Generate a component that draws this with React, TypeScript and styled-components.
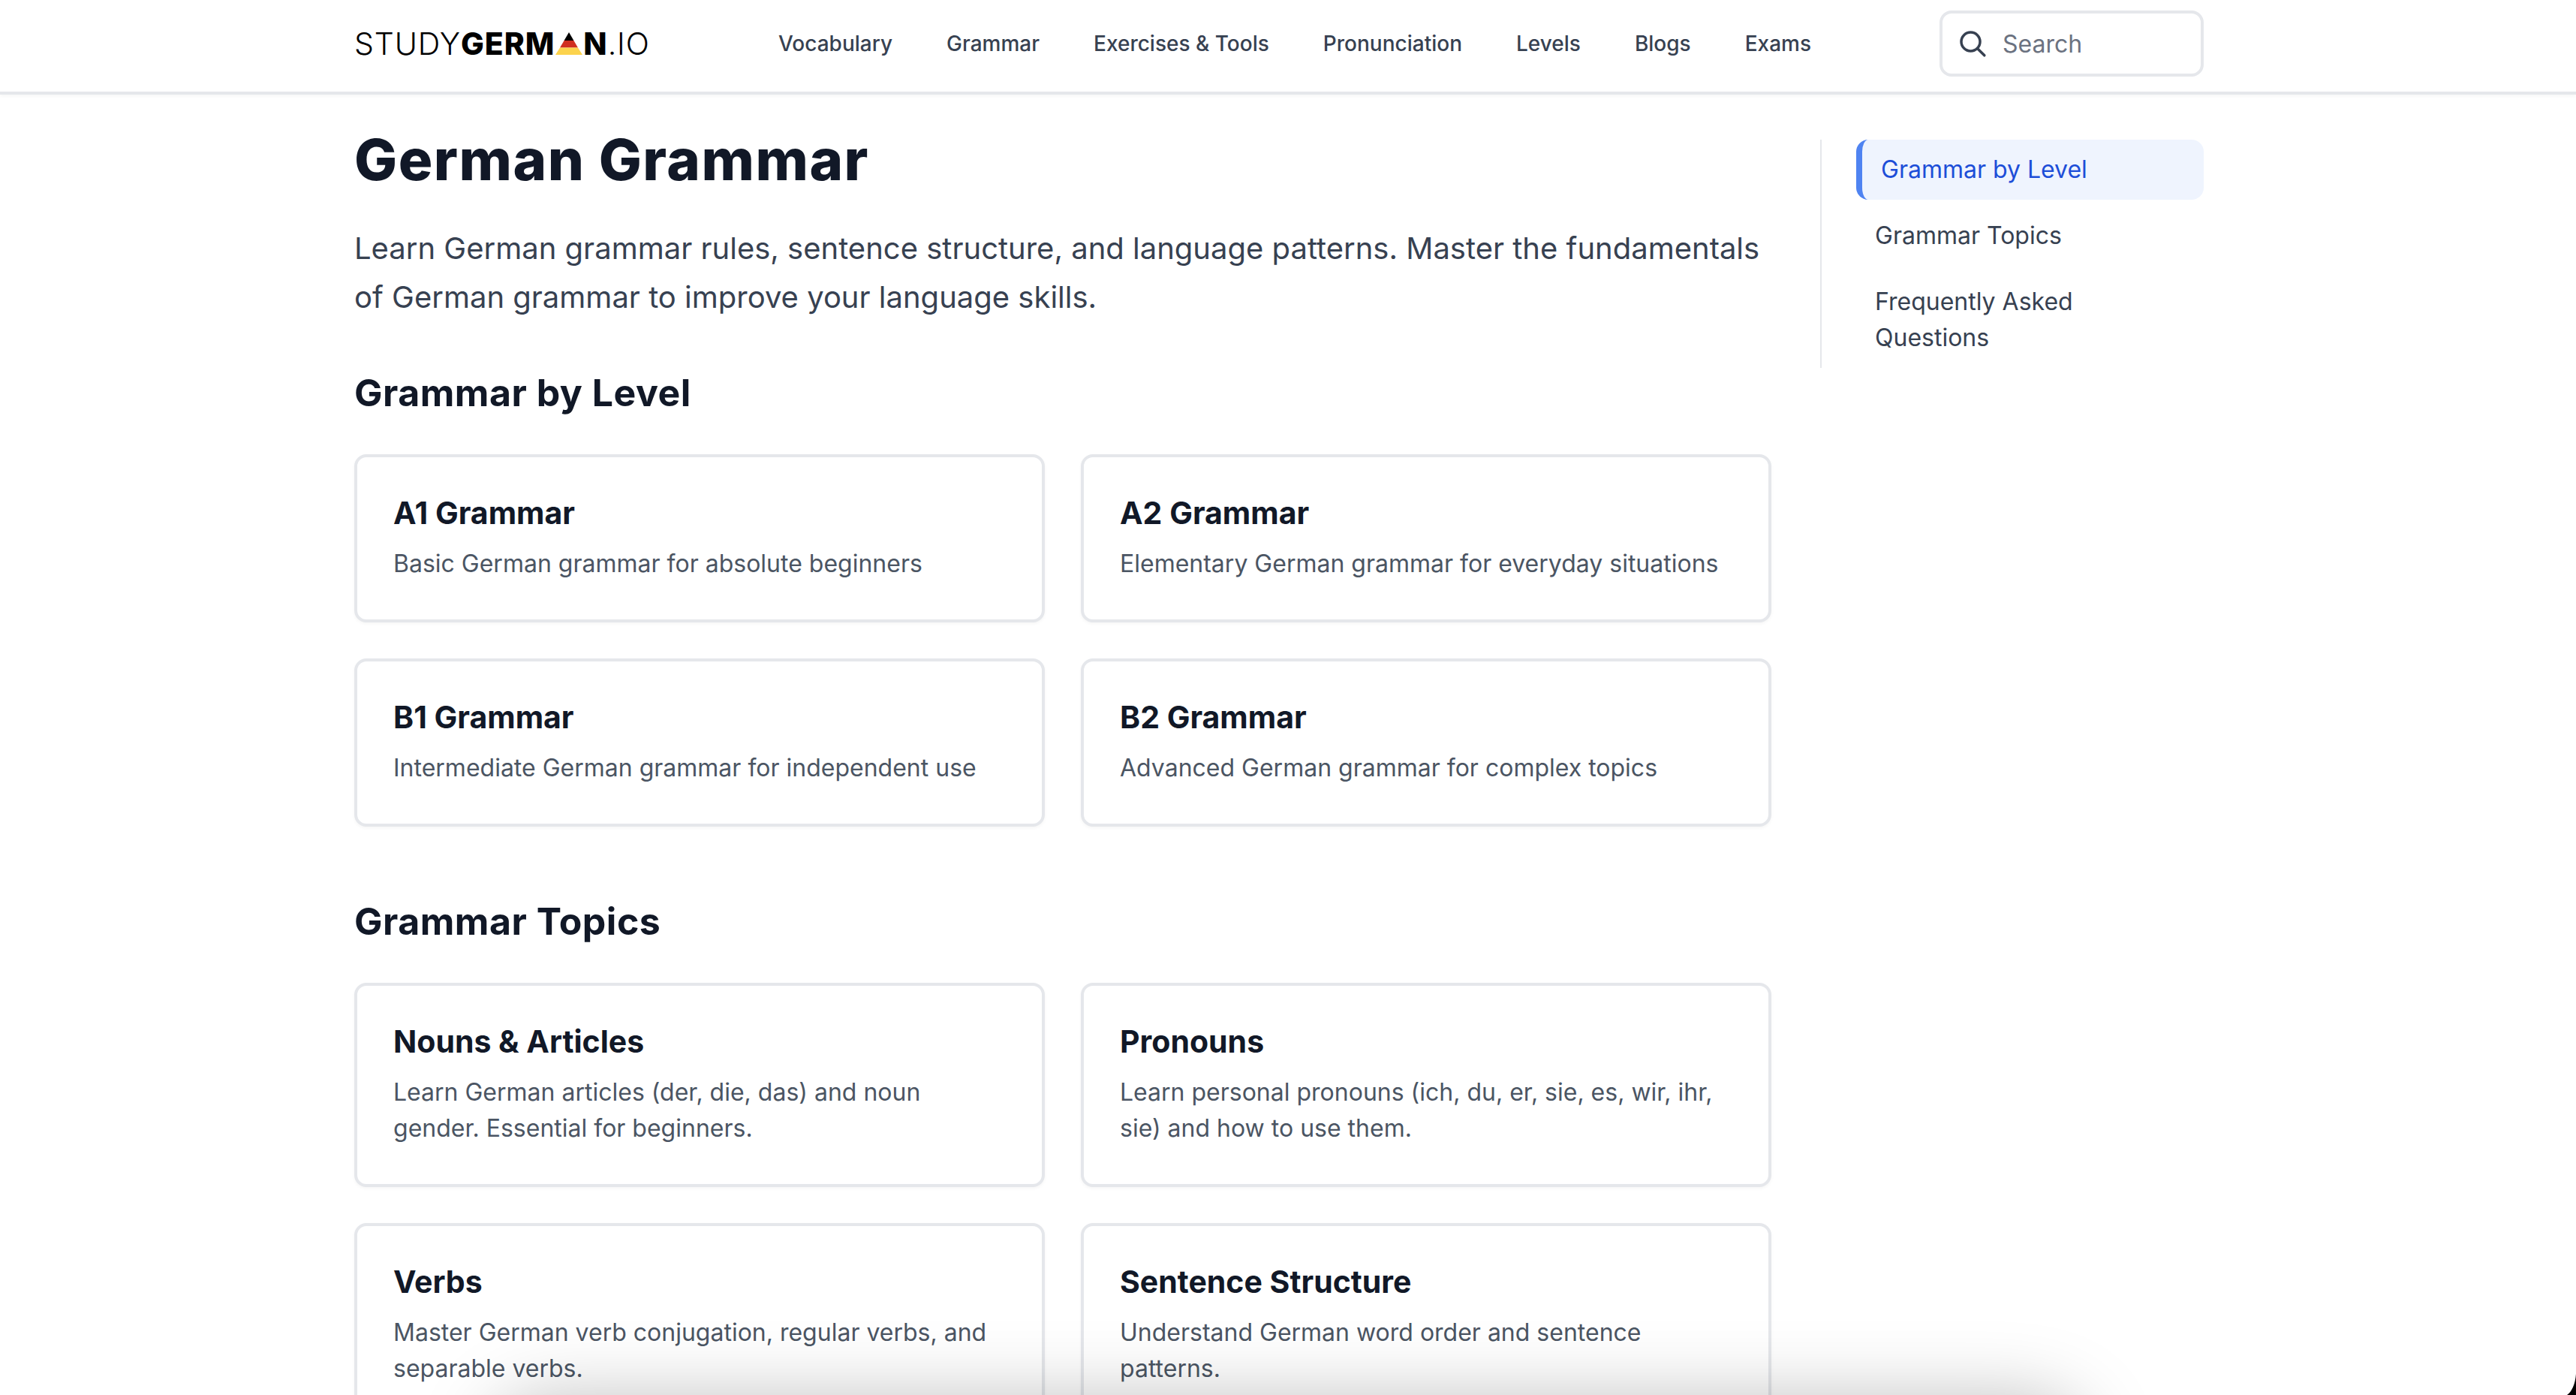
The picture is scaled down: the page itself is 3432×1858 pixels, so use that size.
import React from "react";
import styled, { createGlobalStyle } from "styled-components";

const GlobalStyle = createGlobalStyle`
  html, body {
    margin: 0;
    padding: 0;
    background: #fff;
    font-family: "Inter", "Liberation Sans", sans-serif;
    color: #111827;
  }
  * { box-sizing: border-box; }
`;

const Page = styled.div`
  position: relative;
  width: 3432px;
  height: 1858px;
  overflow: hidden;
`;

const Header = styled.header`
  height: 126px;
  border-bottom: 4px solid #e5e7eb;
  box-shadow: 0 2px 4px rgba(0, 0, 0, 0.04);
  padding: 14px 496px 0 472px;
  display: flex;
  align-items: flex-start;
`;

const Logo = styled.div`
  width: 565px;
  height: 88px;
  display: flex;
  align-items: center;
  font-size: 41px;
  color: #000;
  letter-spacing: 0.9px;
`;

const LogoLight = styled.span`
  font-weight: 300;
`;

const LogoBold = styled.span`
  font-weight: 800;
`;

const Nav = styled.nav`
  display: flex;
  gap: 72px;
  height: 88px;
  align-items: center;
  width: 1547px;
`;

const NavLink = styled.a`
  font-size: 28px;
  font-weight: 500;
  color: #374151;
`;

const SearchBox = styled.div`
  width: 352px;
  height: 88px;
  border: 4px solid #e5e7eb;
  border-radius: 16px;
  display: flex;
  align-items: center;
  gap: 20px;
  padding-left: 20px;
  font-size: 32px;
  color: #6b7280;
`;

const Body = styled.div`
  display: flex;
  padding: 0 496px 0 472px;
`;

const Main = styled.main`
  width: 1953px;
  padding-right: 32px;
`;

const Title = styled.h1`
  margin: 40px 0 0;
  font-size: 76px;
  line-height: 92px;
  font-weight: 800;
  letter-spacing: 1.5px;
  color: #111827;
`;

const Intro = styled.p`
  margin: 40px 0 0;
  font-size: 40px;
  line-height: 65px;
  color: #374151;
`;

const SectionTitle = styled.h2<{ $top: number }>`
  margin: ${(p) => p.$top}px 0 0;
  font-size: 50px;
  line-height: 64px;
  font-weight: 700;
  letter-spacing: 0.5px;
  color: #111827;
`;

const CardGrid = styled.div`
  margin-top: 50px;
  display: grid;
  grid-template-columns: 920px 920px;
  gap: 48px;
`;

const Card = styled.div`
  border: 4px solid #e5e7eb;
  border-radius: 16px;
  box-shadow: 0 2px 4px rgba(0, 0, 0, 0.04);
  padding: 46px 48px 50px;
  background: #fff;
`;

const CardTitle = styled.h3`
  margin: 0;
  font-size: 41px;
  line-height: 56px;
  font-weight: 700;
  color: #111827;
`;

const CardText = styled.p`
  margin: 16px 0 0;
  font-size: 32px;
  line-height: 48px;
  color: #4b5563;
`;

const Sidebar = styled.aside`
  margin-top: 60px;
  align-self: flex-start;
  width: 511px;
  border-left: 2px solid #e5e7eb;
  padding-left: 46px;
  display: flex;
  flex-direction: column;
  gap: 8px;
`;

const SideLink = styled.a<{ $active?: boolean }>`
  display: block;
  font-size: 32px;
  line-height: 48px;
  padding: 16px 25px;
  border-radius: ${(p) => (p.$active ? "16px" : "0")};
  color: ${(p) => (p.$active ? "#1d4ed8" : "#374151")};
  background: ${(p) => (p.$active ? "#eff4fe" : "transparent")};
  border-left: ${(p) => (p.$active ? "8px solid #4f83f1" : "none")};
  font-weight: 400;
`;

// floating element sitting below the fold, only its shadow shows
const BottomShadow = styled.div`
  position: absolute;
  left: 690px;
  right: 690px;
  top: 1900px;
  height: 100px;
  border-radius: 40px;
  box-shadow: 0 0 100px 36px rgba(0, 0, 0, 0.26);
`;

// black window corner at the bottom right of the capture
const WindowCorner = styled.svg`
  position: absolute;
  right: 0;
  bottom: 0;
`;

const SearchIcon = () => (
  <svg width="40" height="40" viewBox="0 0 24 24" fill="none" stroke="#374151" strokeWidth="2.1" strokeLinecap="round">
    <circle cx="10.5" cy="10.5" r="7.5" />
    <path d="M16 16l5.5 5.5" />
  </svg>
);

const LogoMark = () => (
  <svg width="36" height="30" viewBox="0 0 36 30" style={{ margin: "0 1px" }}>
    <path d="M18 0L24.4 11H11.6Z" fill="#000" />
    <path d="M11.6 11H24.4L30 20.5H6Z" fill="#d02f20" />
    <path d="M6 20.5H30L36 30H0Z" fill="#fcd34d" />
  </svg>
);

const navItems = ["Vocabulary", "Grammar", "Exercises & Tools", "Pronunciation", "Levels", "Blogs", "Exams"];

const levels = [
  { title: "A1 Grammar", text: "Basic German grammar for absolute beginners" },
  { title: "A2 Grammar", text: "Elementary German grammar for everyday situations" },
  { title: "B1 Grammar", text: "Intermediate German grammar for independent use" },
  { title: "B2 Grammar", text: "Advanced German grammar for complex topics" },
];

const topics = [
  { title: "Nouns & Articles", text: "Learn German articles (der, die, das) and noun gender. Essential for beginners." },
  { title: "Pronouns", text: "Learn personal pronouns (ich, du, er, sie, es, wir, ihr, sie) and how to use them." },
  { title: "Verbs", text: "Master German verb conjugation, regular verbs, and separable verbs." },
  { title: "Sentence Structure", text: "Understand German word order and sentence patterns." },
];

const App: React.FC = () => {
  return (
    <Page>
      <GlobalStyle />
      <Header>
        <Logo>
          <LogoLight>STUDY</LogoLight>
          <LogoBold>GERM</LogoBold>
          <LogoMark />
          <LogoBold>N</LogoBold>
          <LogoLight>.IO</LogoLight>
        </Logo>
        <Nav>
          {navItems.map((item) => (
            <NavLink key={item}>{item}</NavLink>
          ))}
        </Nav>
        <SearchBox>
          <SearchIcon />
          Search
        </SearchBox>
      </Header>
      <Body>
        <Main>
          <Title>German Grammar</Title>
          <Intro>
            Learn German grammar rules, sentence structure, and language patterns. Master the fundamentals of German grammar to improve your language skills.
          </Intro>
          <SectionTitle $top={63}>Grammar by Level</SectionTitle>
          <CardGrid>
            {levels.map((c) => (
              <Card key={c.title}>
                <CardTitle>{c.title}</CardTitle>
                <CardText>{c.text}</CardText>
              </Card>
            ))}
          </CardGrid>
          <SectionTitle $top={94}>Grammar Topics</SectionTitle>
          <CardGrid>
            {topics.map((c) => (
              <Card key={c.title}>
                <CardTitle>{c.title}</CardTitle>
                <CardText>{c.text}</CardText>
              </Card>
            ))}
          </CardGrid>
        </Main>
        <Sidebar>
          <SideLink $active>Grammar by Level</SideLink>
          <SideLink>Grammar Topics</SideLink>
          <SideLink>Frequently Asked Questions</SideLink>
        </Sidebar>
      </Body>
      <BottomShadow />
      <WindowCorner width="12" height="28" viewBox="0 0 12 28">
        <path d="M12 0V28H0C6 24 11 14 12 0Z" fill="#000" />
      </WindowCorner>
    </Page>
  );
};

export default App;
